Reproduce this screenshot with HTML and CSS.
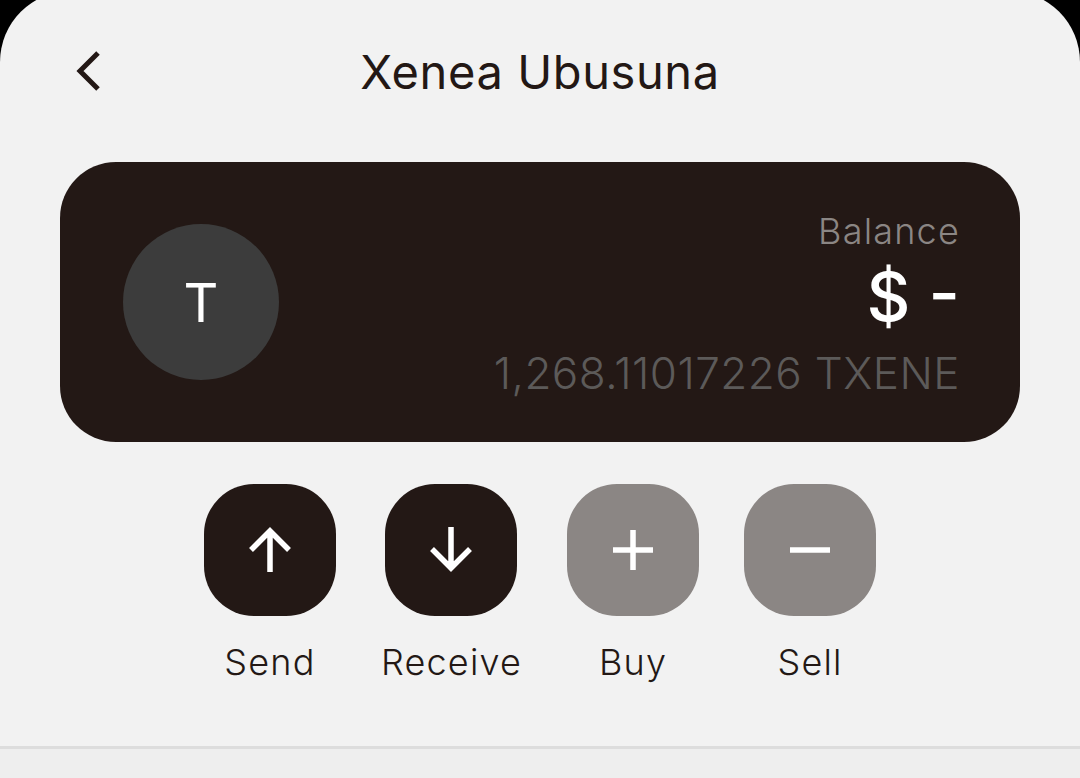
FILE: index.html
```html
<!DOCTYPE html>
<html lang="en">
<head>
  <meta charset="UTF-8">
  <title>Xenea Ubusuna</title>
  <meta name="viewport" content="width=device-width, initial-scale=1.0">
  <link rel="stylesheet" href="styles.css">
</head>
<body>

<main class="sheet">
  <header class="topbar">
    <button class="back" aria-label="Back">
      <svg width="28" height="44" viewBox="0 0 28 44"><path d="M24 3L6 21L24 39" class="line"/></svg>
    </button>
    <h1 class="title">Xenea Ubusuna</h1>
  </header>

  <section class="card">
    <div class="avatar">T</div>
    <div class="balance">
      <div class="balance-label">Balance</div>
      <div class="balance-fiat">$ -</div>
      <div class="balance-token">1,268.11017226 TXENE</div>
    </div>
  </section>

  <section class="actions">
    <div class="action">
      <div class="action-btn">
        <svg width="60" height="60" viewBox="0 0 60 60"><path d="M30 52V11M11 30L30 11L49 30" class="line"/></svg>
      </div>
      <span class="action-label">Send</span>
    </div>
    <div class="action">
      <div class="action-btn">
        <svg width="60" height="60" viewBox="0 0 60 60"><path d="M30 7V48M11 29L30 48L49 29" class="line"/></svg>
      </div>
      <span class="action-label">Receive</span>
    </div>
    <div class="action">
      <div class="action-btn muted">
        <svg width="60" height="60" viewBox="0 0 60 60"><path d="M30 10V50M10 30H50" class="line"/></svg>
      </div>
      <span class="action-label">Buy</span>
    </div>
    <div class="action">
      <div class="action-btn muted">
        <svg width="60" height="60" viewBox="0 0 60 60"><path d="M10 30H50" class="line"/></svg>
      </div>
      <span class="action-label">Sell</span>
    </div>
  </section>

  <div class="below"></div>
</main>

</body>
</html>
```

FILE: styles.css
```css
* { box-sizing: border-box; }
html, body { height: 100%; }
body { margin: 0; background: #000; color: #231815; font-family: "Inter", "Noto Sans", sans-serif; overflow: hidden; }

.sheet { margin-top: -9px; height: 787px; background: #f2f2f2; border-radius: 71px 71px 0 0; display: flex; flex-direction: column; overflow: hidden; }

.topbar { display: grid; grid-template-columns: 1fr auto 1fr; align-items: center; padding: 35px 60px 0; height: 126px; }
.back { background: none; border: none; padding: 0 0 0 14px; display: flex; justify-self: start; }
.back .line { stroke: #231815; stroke-width: 5; }
.title { margin: 0; font-size: 47px; font-weight: 400; line-height: 54px; letter-spacing: 0.6px; }

.line { fill: none; stroke: #fff; stroke-width: 5.5; }

.card { margin: 45px 60px 0; height: 280px; background: #231815; border-radius: 56px; display: flex; align-items: center; justify-content: space-between; padding: 0 60px 0 63px; }
.avatar { width: 156px; height: 156px; border-radius: 50%; background: #3c3c3c; color: #fff; font-size: 54px; display: flex; align-items: center; justify-content: center; }
.balance { text-align: right; padding-top: 12px; }
.balance-label { font-size: 36px; line-height: 50px; font-weight: 300; letter-spacing: 1.2px; color: #8b8684; }
.balance-fiat { font-size: 68px; line-height: 80px; font-weight: 500; color: #fff; }
.balance-token { font-size: 44px; line-height: 74px; font-weight: 300; letter-spacing: 0.45px; color: #5c5a59; }

.actions { margin-top: 42px; display: flex; justify-content: center; gap: 45px; }
.action { display: flex; flex-direction: column; align-items: center; gap: 23px; }
.action-btn { width: 132px; height: 132px; border-radius: 50px; background: #231815; display: flex; align-items: center; justify-content: center; }
.action-btn.muted { background: #8b8684; }
.action-label { font-size: 36px; line-height: 46px; font-weight: 300; letter-spacing: 1.2px; }

.below { margin-top: 61px; flex: 1; background: #eee; border-top: 3px solid #ddd; }
```
